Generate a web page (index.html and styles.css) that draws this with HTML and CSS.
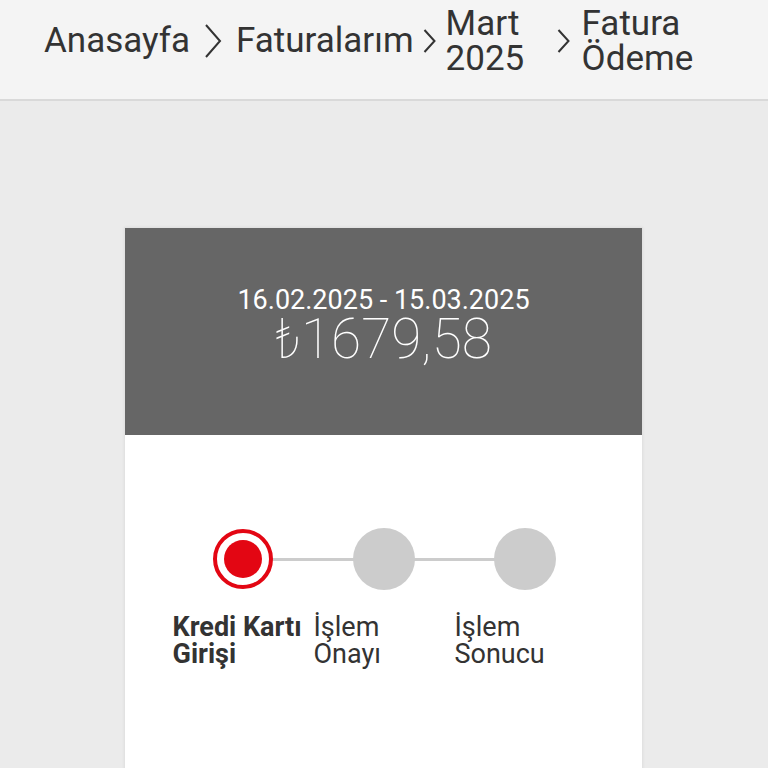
FILE: index.html
```html
<!DOCTYPE html>
<html lang="tr">
<head>
<meta charset="utf-8">
<title>Fatura Ödeme</title>
<link rel="stylesheet" href="styles.css">
</head>
<body>
<header class="topbar">
  <nav class="crumbs">
    <span class="crumb crumb-home">Anasayfa</span>
    <span class="sep sep-big"><svg width="18" height="34" viewBox="0 0 18 34"><path d="M2 1 L16 17 L2 33" fill="none" stroke="#333" stroke-width="2"/></svg></span>
    <span class="crumb">Faturalarım</span>
    <span class="sep sep-small"><svg width="13" height="24" viewBox="0 0 13 24"><path d="M1.5 1 L11.5 12 L1.5 23" fill="none" stroke="#333" stroke-width="2"/></svg></span>
    <span class="crumb crumb-wrap crumb-month">Mart<br>2025</span>
    <span class="sep sep-small sep-last"><svg width="13" height="24" viewBox="0 0 13 24"><path d="M1.5 1 L11.5 12 L1.5 23" fill="none" stroke="#333" stroke-width="2"/></svg></span>
    <span class="crumb crumb-wrap">Fatura<br>Ödeme</span>
  </nav>
</header>
<main class="main">
  <section class="card">
    <div class="card-head">
      <div class="period">16.02.2025 - 15.03.2025</div>
      <div class="amount">₺1679,58</div>
    </div>
    <div class="card-body">
      <div class="steps">
        <div class="step">
          <div class="dot-row"><span class="dot dot-active"><span class="dot-inner"></span></span></div>
          <div class="label label-active">Kredi Kartı Girişi</div>
        </div>
        <div class="step">
          <div class="dot-row"><span class="dot"></span></div>
          <div class="label">İşlem Onayı</div>
        </div>
        <div class="step">
          <div class="dot-row"><span class="dot"></span></div>
          <div class="label">İşlem Sonucu</div>
        </div>
        <div class="line line-1"></div>
        <div class="line line-2"></div>
      </div>
    </div>
  </section>
</main>
</body>
</html>
```

FILE: styles.css
```css
* { box-sizing: border-box; }
html, body {
  margin: 0;
  padding: 0;
  height: 100%;
}
body {
  background: #ebebeb;
  font-family: Roboto, "Noto Sans", "DejaVu Sans", sans-serif;
  color: #333;
  overflow: hidden;
}
.topbar {
  height: 101px;
  background: #f4f4f4;
  border-bottom: 2px solid #d9d9d9;
  padding: 0 0 18px 44px;
  display: flex;
  align-items: center;
}
.crumbs {
  display: flex;
  align-items: center;
  font-size: 35px;
  line-height: 35px;
  color: #333;
}
.crumb { white-space: nowrap; }
.crumb-wrap { line-height: 35px; }
.sep {
  display: flex;
  align-items: center;
  justify-content: center;
}
.sep svg { display: block; }
.sep-big { width: 46px; margin-top: 1px; }
.sep-small { width: 32px; margin-top: 1px; }
.crumb-month { width: 101px; }
.sep-last { width: 35px; justify-content: flex-start; padding-left: 10px; }
.main {
  padding-top: 126px;
  display: flex;
  justify-content: center;
}
.card {
  width: 519px;
  background: #fff;
  border: 1px solid #e2e2e2;
  box-shadow: 0 0 3px rgba(0,0,0,0.06);
  min-height: 700px;
  margin-left: -1px;
}
.card-head {
  height: 207px;
  background: #666;
  color: #fff;
  text-align: center;
  padding-top: 59px;
}
.period {
  font-size: 27px;
  line-height: 27px;
  font-weight: 400;
}
.amount {
  font-size: 55px;
  line-height: 50px;
  font-weight: 100;
}
.card-body {
  padding-top: 93px;
  display: flex;
  justify-content: center;
}
.steps {
  position: relative;
  display: grid;
  grid-template-columns: repeat(3, 141px);
  margin-left: 1px;
}
.step {
  display: flex;
  flex-direction: column;
  position: relative;
  z-index: 1;
}
.dot-row {
  height: 62px;
  display: flex;
  justify-content: center;
  align-items: center;
}
.dot {
  width: 62px;
  height: 62px;
  border-radius: 50%;
  background: #cccccc;
  display: flex;
  align-items: center;
  justify-content: center;
}
.dot-active {
  width: 60px;
  height: 60px;
  background: #fff;
  border: 4px solid #e30613;
}
.dot-inner {
  width: 38px;
  height: 38px;
  border-radius: 50%;
  background: #e30613;
}
.line {
  position: absolute;
  top: 30px;
  height: 3px;
  background: #cccccc;
  z-index: 0;
}
.line-1 { left: 70px; width: 141px; }
.line-2 { left: 211px; width: 141px; }
.label {
  margin-top: 24px;
  padding-right: 9px;
  font-size: 27px;
  line-height: 27px;
  color: #333;
}
.label-active {
  font-weight: 700;
}
```
